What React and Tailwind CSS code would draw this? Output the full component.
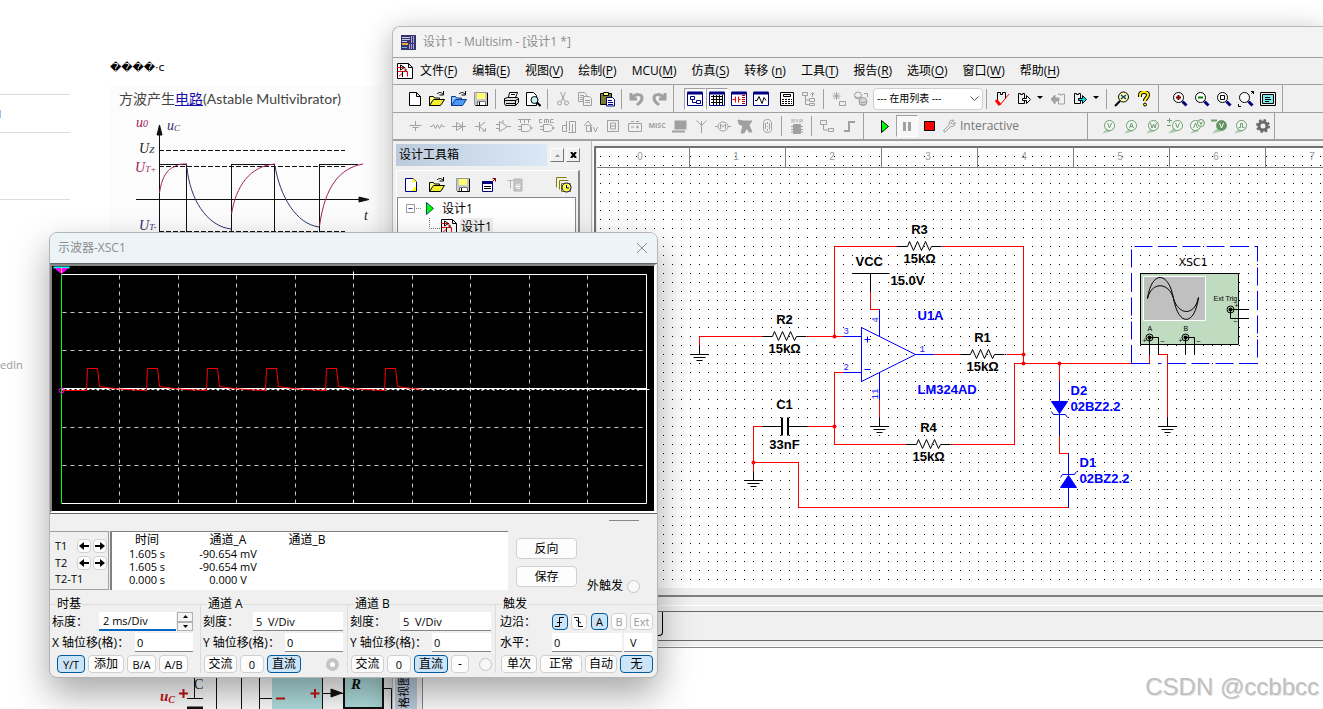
import React from "react";

const ui = "font-['Open_Sans','Noto_Sans_CJK_SC',sans-serif]";

// ---------- icons ----------

function Icon({ children, color = "#000", size = 16 }) {
  return (
    <svg
      width={size}
      height={size}
      viewBox="0 0 16 16"
      fill="none"
      stroke={color}
      strokeWidth="1"
      aria-hidden="true"
      className="shrink-0"
    >
      {children}
    </svg>
  );
}

const G = "#a0a0a0";

const magnifier = (inner) => (
  <Icon>
    <circle cx="6.5" cy="6.5" r="5" fill="#fff" />
    <path d="M10.5 10.5l4 4" stroke="#000080" strokeWidth="3" />
    {inner}
  </Icon>
);

const icons = {
  newFile: (
    <Icon>
      <path d="M2.500 1.500h7l4 4v9h-11zM9.500 1.500v4h4" fill="#fff" />
    </Icon>
  ),
  newYellow: (
    <Icon>
      <path d="M2.500 1.500h8l3 3v10h-11z" fill="#fff" stroke="#000080" />
      <path d="M10 1l4 4h-4zM8 14l5-5v5z" fill="#ffff00" stroke="none" />
    </Icon>
  ),
  open: (
    <Icon>
      <path d="M.5 14.500v-9h4l1 1.500h5v2" fill="#ffff80" />
      <path d="M.5 14.500l4-6h11l-4 6z" fill="#f4ee30" />
      <path d="M8 3c2-2 4-2 6 0M14.500 0v4h-4" />
    </Icon>
  ),
  openBlue: (
    <Icon>
      <path d="M.5 14.500v-9h4l1 1.500h5v2" fill="#8fc4ff" stroke="#0b3a8c" />
      <path d="M.5 14.500l4-6h11l-4 6z" fill="#4a9bf5" stroke="#0b3a8c" />
      <path d="M8 3c2-2 4-2 6 0M14.500 0v4h-4" />
    </Icon>
  ),
  save: (
    <Icon>
      <path d="M1.500 1.500h13v13h-12l-1-1z" fill="#c8c8c8" stroke="#999" />
      <path d="M4 2h8v6H4z" fill="#ffff70" stroke="none" />
      <path d="M4.500 10.500h8v4h-8z" fill="#fff" stroke="#777" />
      <path d="M6.500 11v3M14.500 2v12.500h-12" stroke="#000" />
    </Icon>
  ),
  print: (
    <Icon>
      <path d="M5.500 6.500l1-5h8l-2 5" fill="#fff" />
      <path d="M1.500 7.500l3-1h10l1 1v4l-3 3h-10l-1-2z" fill="#ddd" />
      <path d="M1.500 9.500h11l3-2M3 12.500h9M8 3.500h4M12.500 9.500v5" />
    </Icon>
  ),
  preview: (
    <Icon>
      <path d="M1.500 1.500h7l3 3v10h-10z" fill="#fff" />
      <circle cx="9.500" cy="9" r="3.500" fill="#c9f1f5" />
      <path d="M12 11.500l3.500 3.500" strokeWidth="2" />
    </Icon>
  ),
  cut: (
    <Icon color={G}>
      <path d="M5.500 1l4 9M10.500 1l-4 9" />
      <circle cx="4.500" cy="12" r="2" />
      <circle cx="11.500" cy="12" r="2" />
    </Icon>
  ),
  copy: (
    <Icon color={G}>
      <path d="M1.500 1.500h6l2 2v7h-8zM3 4.500h4M3 6.500h4M3 8.500h4" />
      <path d="M6.500 5.500h6l2 2v7h-8zM8 9.500h5M8 11.500h5" fill="#f0f0f0" />
    </Icon>
  ),
  paste: (
    <Icon>
      <path d="M1.500 2.500h11v11h-11z" fill="#7a7a2e" />
      <path d="M4.500 1.500h5v3h-5z" fill="#ffff80" />
      <path d="M7.500 6.500h6l2 2v6.500h-8z" fill="#fff" stroke="#000080" />
      <path d="M9 9.500h4M9 11.500h5M9 13.500h5" stroke="#000080" />
    </Icon>
  ),
  undo: (
    <Icon color={G}>
      <path d="M2 2v6h6M3 7c4-5 10-4 10 0 0 4-3 5-5 7" strokeWidth="3" />
    </Icon>
  ),
  redo: (
    <Icon color={G}>
      <path d="M14 2v6H8M13 7C9 2 3 3 3 7c0 4 3 5 5 7" strokeWidth="3" />
    </Icon>
  ),
  toolbox: (
    <Icon color="#000080">
      <path d="M.5 1.500h15v13h-15z" fill="#fff" />
      <path d="M.5 2h15" strokeWidth="3" />
      <path d="M3.500 5.500h4v3h-4zM9.500 9.500h4v3h-4zM5.500 9v2.500h4" />
    </Icon>
  ),
  sheet: (
    <Icon color="#000080">
      <path d="M.5 1.500h15v13h-15z" fill="#fff" />
      <path d="M.5 2h15" strokeWidth="3" />
      <path d="M2 5.500h12M2 8.500h12M2 11.500h12M4.500 4v10M7.500 4v10M10.500 4v10M13.500 4v10" stroke="#000" />
    </Icon>
  ),
  spice: (
    <Icon color="#000080">
      <path d="M.5 1.500h15v13h-15z" fill="#fff" />
      <path d="M.5 2h15" strokeWidth="3" />
      <path d="M1.500 8.500h3M4.500 5.500v6M7.500 5.500v6M7.500 8.500h2" stroke="#f00" />
      <path d="M12.500 4v10" stroke="#a00" strokeWidth="3" strokeDasharray="1 1" />
    </Icon>
  ),
  grapher: (
    <Icon color="#000080">
      <path d="M.5 1.500h15v13h-15z" fill="#fff" />
      <path d="M.5 2h15" strokeWidth="3" />
      <path d="M2 9.500h2l2-4 3 7 2-6 2 3" stroke="#000" />
    </Icon>
  ),
  calc: (
    <Icon>
      <path d="M1.500 1.500h13v13h-13z" fill="#fff" />
      <path d="M4.500 3.500h7v2h-7z" />
      <path d="M3 8.500h10M3 10.500h10M3 12.500h10" strokeDasharray="2 1" />
    </Icon>
  ),
  tree: (
    <Icon color={G}>
      <path d="M1.500 1.500h5v3h-5zM8.500 7.500h5v3h-5zM8.500 12.500h5v2h-5zM4.500 5v8.500h4M4.500 9h4M11.500 6V2M9.500 3.500l2-2 2 2" />
    </Icon>
  ),
  spark: (
    <Icon color={G}>
      <path d="M5.500 1v8M1.500 5h8M2.500 2l6 6M8.500 2l-6 6M8.500 10.500h6v4h-6z" />
    </Icon>
  ),
  database: (
    <Icon color={G}>
      <circle cx="5" cy="4.500" r="3.500" />
      <circle cx="10" cy="10.500" r="4" fill="#d4d4d4" />
      <path d="M1.500 5c2 2 5 2 7 0M6 10c2 2 6 2 8 0M6 12.500c2 2 6 2 8 0M11 2.500h3.500V6" />
    </Icon>
  ),
  erc: (
    <Icon>
      <path d="M3.500 10.500v-9h3v2h2v-2h3v6" />
      <path d="M3 9l3 5L15 3" stroke="#f00" />
      <path d="M2 9l4 5" stroke="#f00" strokeWidth="3" />
    </Icon>
  ),
  toPcb: (
    <Icon>
      <path d="M2.500 12.500v-10h2v1h2v-1h2v10z" />
      <path d="M6.500 7.500h4v-3l4 4-4 4v-3h-4z" fill="#fff" />
    </Icon>
  ),
  fromPcb: (
    <Icon color={G}>
      <path d="M1 8l4-4v3h4v3H5v3z" fill={G} />
      <path d="M8.500 4v-1h2v1h2v-1h2v10h-6v-2" />
    </Icon>
  ),
  toPcbCyan: (
    <Icon>
      <path d="M2.500 12.500v-10h2v1h2v-1h2v10z" />
      <path d="M6.500 7.500h4v-3l4 4-4 4v-3h-4z" fill="#00e5e5" />
    </Icon>
  ),
  findExample: (
    <Icon>
      <circle cx="9.500" cy="6" r="5" fill="#ffffb0" />
      <path d="M6 10l-5 5" strokeWidth="2" />
      <path d="M7 4l5 4M12 4L7 8" stroke="#0a4a7a" strokeWidth="1.500" />
    </Icon>
  ),
  help: (
    <Icon>
      <path d="M4 6V4c0-4 8-4 8 0 0 3-3 3-3 6" strokeWidth="4" />
      <path d="M4 6V4c0-4 8-4 8 0 0 3-3 3-3 6" stroke="#ffee00" strokeWidth="2" />
      <circle cx="9" cy="13.500" r="1.500" fill="#ffee00" />
    </Icon>
  ),
  zoomIn: magnifier(<path d="M4 6.500h5M6.500 4v5" stroke="#800000" strokeWidth="2" />),
  zoomOut: magnifier(<path d="M4 6.500h5" stroke="#008000" strokeWidth="2" />),
  zoomArea: magnifier(<path d="M4.500 4.500h4v4h-4z" />),
  zoomFit: magnifier(<path d="M13 .5h2.500V3M.5 13v2.500H3M15.500 .5l-2 2" />),
  fullScreen: (
    <Icon>
      <path d="M.5 1.500h15v13h-15z" fill="#f0f0f0" />
      <path d="M2.500 3.500h11v9h-11z" fill="#7fe8ea" />
      <path d="M5 6.500h5M5 8.500h6M5 10.500h4" />
    </Icon>
  ),
  schematic: (
    <Icon>
      <path d="M.5 .5h11l4 4v11H.5zM11.500 .5v4h4" fill="#fff" />
      <path d="M0 4.500h8v4H1M8.500 8.500h2v5M2 13l4-3" stroke="#f00" />
      <path d="M3.500 2l4 2.500-4 2.500zM5.500 8v6M9 6v3" />
    </Icon>
  ),
  report: (
    <Icon>
      <path d="M1.500 4.500h10v10h-10z" fill="#fff" stroke="#000080" />
      <path d="M1 5.500h11" stroke="#000080" strokeWidth="3" />
      <path d="M3 9.500h7M3 11.500h7" />
      <path d="M11 5l3.500-3.500M11.500 1.500h3v3" stroke="#800000" />
    </Icon>
  ),
  rename: (
    <Icon color="#b4b4b4">
      <path d="M.5 3.500h6M3.500 3.500v8" />
      <path d="M7 2h8v12H7z" fill="#c4c4c4" />
      <path d="M9 9.500h4c0-3-4-3-4 0 0 2 3 2.500 4 1.500" stroke="#fff" />
    </Icon>
  ),
  history: (
    <Icon color="#808000">
      <path d="M.5 10.500v-10h10M3.500 12.500v-9h9M5.500 14.500v-8h9v8z" />
      <circle cx="10.500" cy="10.500" r="4.500" fill="#ffff40" stroke="#000080" />
      <path d="M10.500 8v3h2.500" stroke="#000080" />
    </Icon>
  ),
};

// component bar: one grey outline per part family
const partIcons = [
  ["电源", <path d="M8.500 3v4M2.500 7.500h12M5.500 9.500h6M8.500 10v3" />],
  ["基本", <path d="M1 8.500h2l1.500-2 2 4 2-4 2 4 2-4 1 2h2" />],
  ["二极管", <path d="M1 8.500h14M5.500 4.500v8l6-4zM11.500 4v9" />],
  ["晶体管", <path d="M2 8.500h4M6.500 4v9M7 8l5-4M7 9l5 4M9.500 13h3v-3" />],
  ["模拟", <path d="M4.500 3.500v10l8-5zM1 6.500h3M1 10.500h3M12 8.500h4M8 2v3" />],
  ["TTL", <path d="M1 1.500h13M3.500 1v4M7.500 1v4M11.500 1v4M4.500 6.500h5c6 0 6 7 0 7h-5zM1 8.500h3M1 11.500h3M13 10h3" />],
  ["CMOS", <path d="M3 1.500H.500v3H3M5.500 5V1.500h4V5M7.500 1v4M14.500 1.500h-3v3h3M4.500 6.500h5c6 0 6 7 0 7h-5zM1 8.500h3M1 11.500h3M13 10h3" />],
  ["其他数字", <path d="M1.500 13.500v-6h4v6zM5.500 3v11M8.500 13V3.500h6v11M11.500 6v8M7 14.500h8" />],
  ["混合", <path d="M1 8l4-5 4 5M3.500 7.500v6h4v-6zM8.500 9v5M10.500 9l2 5 2-5" />],
  ["指示器", <path d="M2.500 2.500h11v11h-11zM5.500 5h5v6h-5zM5.500 8h5" />],
  ["功率", <path d="M1.500 5.500h13v8h-13zM4 3.500h3M9 3.500h3M4 9h3M9 9h3M10.500 7.500v3" />],
  ["杂项", null],
  ["外设", <path d="M4.500 3.500h10v7h-10zM1 13.500h13" fill={G} strokeWidth="2" />],
  ["射频", <path d="M8.500 15V3M3.500 2.500l5 5 5-5" />],
  ["机电", <path d="M0 8.500h3M13 8.500h3M5.500 11V6l2.500 3 2.500-3v5M3 8.500a5 4.500 0 0 1 10 0 5 4.500 0 0 1-10 0" />],
  ["NI", <path d="M1 2l5 1h9l-3 4 3 7h-3l-2-4-3 5H4l2-7-4-2z" fill={G} />],
  ["连接器", <path d="M4.500 4.500c0-4 8-4 8 0v7c0 4-8 4-8 0zM8.500 4v2M8.500 8v1M8.500 11v2M6.500 5v6M10.500 5v6" />],
];

function ToolButton({ label, pressed, children, onClick }) {
  return (
    <button
      type="button"
      aria-label={label}
      onClick={onClick}
      className={
        pressed
          ? "flex h-[22px] w-[22px] shrink-0 items-center justify-center border border-[#a0a0a0] border-r-white border-b-white bg-[#f8f8f8]"
          : "flex h-[22px] w-[22px] shrink-0 items-center justify-center"
      }
    >
      {children}
    </button>
  );
}

function Sep() {
  return <span className="mx-[3px] h-5 w-[2px] shrink-0 border-l border-[#a0a0a0]" />;
}

function Band() {
  return <span className="ml-[3px] mr-[10px] h-full w-px shrink-0 bg-[#a0a0a0]" />;
}

function Caret() {
  return (
    <span className="flex w-3 shrink-0">
      <svg width="9" height="5" viewBox="0 0 9 5" aria-hidden="true">
        <path d="M2 0h6l-3 3z" fill="#000" />
      </svg>
    </span>
  );
}

function MenuBar() {
  const items = [
    ["文件(", "F"],
    ["编辑(", "E"],
    ["视图(", "V"],
    ["绘制(", "P"],
    ["MCU(", "M"],
    ["仿真(", "S"],
    ["转移 (", "n"],
    ["工具(", "T"],
    ["报告(", "R"],
    ["选项(", "O"],
    ["窗口(", "W"],
    ["帮助(", "H"],
  ];
  return (
    <nav className="flex h-[27px] shrink-0 items-center gap-[7px] border-t border-[#a0a0a0] pl-1 text-xs whitespace-nowrap">
      {icons.schematic}
      <div className="flex gap-[15px]">
        {items.map(([text, key]) => (
          <button key={key} type="button">
            {text}
            <u className="underline-offset-2">{key}</u>)
          </button>
        ))}
      </div>
    </nav>
  );
}

function MainToolbar() {
  return (
    <div className="flex h-7 shrink-0 items-center border-t border-[#a0a0a0] pl-[11px]">
      <ToolButton label="新建">{icons.newFile}</ToolButton>
      <ToolButton label="打开">{icons.open}</ToolButton>
      <ToolButton label="打开样本">{icons.openBlue}</ToolButton>
      <ToolButton label="保存">{icons.save}</ToolButton>
      <Sep />
      <ToolButton label="打印">{icons.print}</ToolButton>
      <ToolButton label="打印预览">{icons.preview}</ToolButton>
      <Sep />
      <ToolButton label="剪切">{icons.cut}</ToolButton>
      <ToolButton label="复制">{icons.copy}</ToolButton>
      <ToolButton label="粘贴">{icons.paste}</ToolButton>
      <Sep />
      <ToolButton label="撤消">{icons.undo}</ToolButton>
      <ToolButton label="重做">{icons.redo}</ToolButton>
      <Band />
      <ToolButton label="设计工具箱" pressed>{icons.toolbox}</ToolButton>
      <ToolButton label="电子表格" pressed>{icons.sheet}</ToolButton>
      <ToolButton label="SPICE">{icons.spice}</ToolButton>
      <ToolButton label="图示仪">{icons.grapher}</ToolButton>
      <span className="w-1 shrink-0" />
      <ToolButton label="后处理器">{icons.calc}</ToolButton>
      <ToolButton label="母电路图">{icons.tree}</ToolButton>
      <Sep />
      <ToolButton label="元器件向导">{icons.spark}</ToolButton>
      <ToolButton label="数据库管理器">{icons.database}</ToolButton>
      <div className="relative ml-px w-[110px] shrink-0">
        <select
          aria-label="在用列表"
          className="block h-[22px] w-full appearance-none rounded-sm border border-[#cfcfcf] bg-white pl-[3px] text-[10px]"
        >
          <option>--- 在用列表 ---</option>
        </select>
        <svg width="9" height="6" viewBox="0 0 9 6" className="pointer-events-none absolute top-2 right-1" aria-hidden="true">
          <path d="M.5 .5l4 4 4-4" fill="none" stroke="#555" />
        </svg>
      </div>
      <Sep />
      <ToolButton label="电器法则查验">{icons.erc}</ToolButton>
      <ToolButton label="转移到布局">{icons.toPcb}</ToolButton>
      <Caret />
      <ToolButton label="反向注解">{icons.fromPcb}</ToolButton>
      <ToolButton label="正向注解">{icons.toPcbCyan}</ToolButton>
      <Caret />
      <Sep />
      <ToolButton label="查找范例">{icons.findExample}</ToolButton>
      <ToolButton label="帮助">{icons.help}</ToolButton>
      <Band />
      <ToolButton label="放大">{icons.zoomIn}</ToolButton>
      <ToolButton label="缩小">{icons.zoomOut}</ToolButton>
      <ToolButton label="缩放区域">{icons.zoomArea}</ToolButton>
      <ToolButton label="缩放页面">{icons.zoomFit}</ToolButton>
      <ToolButton label="全屏">{icons.fullScreen}</ToolButton>
      <Band />
    </div>
  );
}

function Probe({ children, x = 8.5, filled }) {
  return (
    <Icon color="#6f9a6f">
      <path d="M1 15.500l5-5 4 3z" fill="#a9cba9" stroke="none" />
      <circle cx={x} cy="7.500" r="5" fill={filled ? "#5f935f" : "#f3f8f3"} />
      {children}
    </Icon>
  );
}

function PartsToolbar() {
  return (
    <div className="flex h-[29px] shrink-0 items-center border-t border-b-2 border-[#a0a0a0] pl-[11px]">
      {partIcons.map(([label, art]) => (
        <ToolButton key={label} label={label}>
          {art ? <Icon color={G}>{art}</Icon> : <span className="text-[7px] font-bold text-[#a0a0a0]">MISC</span>}
        </ToolButton>
      ))}
      <Sep />
      <ToolButton label="MCU">
        <Icon color={G}>
          <path d="M4.500 6.500h7v9h-7zM2 8.500h12M2 11.500h12M2 14h12" fill={G} />
          <path d="M3 1v3.500M5 1v3.500M8 1v3.500M11 1v3.500M13 1v3.500" />
        </Icon>
      </ToolButton>
      <Sep />
      <ToolButton label="层次块">
        <Icon color={G}>
          <path d="M1.500 2.500h6v4h-6zM9.500 10.500h5v3h-5zM4.500 7v5h5" />
        </Icon>
      </ToolButton>
      <ToolButton label="总线">
        <Icon color={G}>
          <path d="M3 13h5V4h6" strokeWidth="2" />
        </Icon>
      </ToolButton>
      <Band />
      <ToolButton label="运行">
        <Icon>
          <path d="M4.500 2.500v12l7-6z" fill="#0f0" />
        </Icon>
      </ToolButton>
      <ToolButton label="暂停" pressed>
        <Icon color={G}>
          <path d="M5.500 4v9M10.500 4v9" strokeWidth="3" />
        </Icon>
      </ToolButton>
      <ToolButton label="停止">
        <Icon>
          <path d="M3.500 3.500h10v9h-10z" fill="#f00" />
        </Icon>
      </ToolButton>
      <button type="button" className="flex w-[144px] shrink-0 items-center text-xs text-[#777]">
        <span className="flex w-5 justify-end pr-1">
          <Icon color="#888" size={14}>
            <path d="M1.500 13.500l7-7c-1-3 1-6 5-5l-3 3 1.500 1.500 3-2c0 4-2 5-5 4.500l-6.500 6.500z" />
          </Icon>
        </span>
        Interactive
      </button>
      <Band />
      <ToolButton label="电压探针"><Probe><path d="M6.500 5l2 5 2-5" /></Probe></ToolButton>
      <ToolButton label="电流探针"><Probe><path d="M6.500 10l2-5 2 5M7 8.500h3" /></Probe></ToolButton>
      <ToolButton label="功率探针"><Probe><path d="M5.500 5l1.500 5 1.500-4 1.500 4 1.500-5" /></Probe></ToolButton>
      <ToolButton label="差分电压探针"><Probe x={10.5}><path d="M8.500 5l2 5 2-5M0 2.500h5M2.500 0v5M0 7.500h4" /></Probe></ToolButton>
      <ToolButton label="电压电流探针">
        <Probe x={6.5}>
          <circle cx="12" cy="5" r="3.500" fill="#f3f8f3" />
          <path d="M4.500 10l2-5 2 5M10.500 3.500l1.500 3 1.500-3" />
        </Probe>
      </ToolButton>
      <ToolButton label="参考电压探针"><Probe x={10.5} filled><path d="M8.500 5l2 5 2-5" stroke="#fff" /><path d="M0 2.500h6" strokeWidth="2" /></Probe></ToolButton>
      <ToolButton label="数字探针"><Probe><path d="M5.500 9.500h2v-4h2v4h2" /></Probe></ToolButton>
      <ToolButton label="探针设置">
        <Icon color="#6a6a6a">
          <circle cx="8" cy="8" r="4" strokeWidth="3" />
          <circle cx="8" cy="8" r="6" strokeWidth="2" strokeDasharray="2.400 2.300" />
        </Icon>
      </ToolButton>
      <span className="h-full w-px shrink-0 bg-[#a0a0a0]" />
    </div>
  );
}

function DesignToolbox() {
  return (
    <aside className="flex w-[199px] shrink-0 flex-col border-r border-[#b8b8b8] pt-[2px] pr-[11px] pl-[3px]">
      <div className="flex h-6 items-center gap-[2px]">
        <h2 className="mr-[1px] flex h-[22px] flex-1 items-center bg-linear-to-r from-[#bccbdc] to-[#dbe8f6] pl-[3px] text-xs">
          设计工具箱
        </h2>
        <button
          type="button"
          aria-label="收起"
          className="flex size-[14px] items-center justify-center border border-white border-r-[#777] border-b-[#777]"
        >
          <svg width="5" height="3" viewBox="0 0 5 3" aria-hidden="true"><path d="M0 3h5L2.500 0z" fill="#999" /></svg>
        </button>
        <button
          type="button"
          aria-label="关闭工具箱"
          className="flex size-[14px] items-center justify-center border border-white border-r-[#777] border-b-[#777]"
        >
          <svg width="7" height="6" viewBox="0 0 7 6" aria-hidden="true"><path d="M1 0l5 6M6 0L1 6" stroke="#000" strokeWidth="2" /></svg>
        </button>
      </div>
      <div className="mt-[3px] flex flex-1 flex-col border-t border-r-2 border-l border-t-white border-r-[#888] border-l-white">
        <div className="flex h-[26px] items-center gap-[4px] px-[3px] pt-[2px]">
          <ToolButton label="新建设计">{icons.newYellow}</ToolButton>
          <ToolButton label="打开设计">{icons.open}</ToolButton>
          <ToolButton label="保存设计">{icons.save}</ToolButton>
          <ToolButton label="关闭设计">{icons.report}</ToolButton>
          <ToolButton label="重命名">{icons.rename}</ToolButton>
          <span className="flex-1" />
          <ToolButton label="历史">{icons.history}</ToolButton>
        </div>
        <ul className="mr-[2px] flex-1 border border-[#828790] bg-white pt-[2px] pl-2 text-xs leading-[18px]">
          <li className="flex items-center">
            <svg width="35" height="18" viewBox="0 0 35 18" aria-hidden="true">
              <path d="M.5 4.500h8v8h-8z" fill="#fff" stroke="#999" />
              <path d="M2.500 8.500h4" stroke="#2a4ab0" />
              <path d="M10 8.500h6" stroke="#888" strokeDasharray="1 1" />
              <path d="M20.500 2.500v12l7-6z" fill="#0f0" stroke="#055" />
            </svg>
            <span className="pl-px">设计1</span>
          </li>
          <li className="flex items-center">
            <svg width="35" height="18" viewBox="0 0 35 18" aria-hidden="true">
              <path d="M23.500 0v10.500h11" fill="none" stroke="#777" strokeDasharray="1 1" />
            </svg>
            {icons.schematic}
            <span className="ml-[3px] bg-[#efefef] px-px">设计1</span>
          </li>
        </ul>
      </div>
    </aside>
  );
}

// ---------- circuit ----------

function Resistor({ x, y, name, value = "15kΩ" }) {
  return (
    <g transform={`translate(${x} ${y})`}>
      <path d="M-22 0H-12L-10-5L-6 4L-2-5L2 4L6-5L10 4L12 0H22" stroke="#000" fill="none" />
      <Label x={0} y={-13} anchor="middle">{name}</Label>
      <Label x={0} y={16} anchor="middle">{value}</Label>
    </g>
  );
}

function Ground({ x, y }) {
  return <path transform={`translate(${x} ${y})`} d="M0-9V0M-9 0H9M-6 3H6M-3 6H3" stroke="#000" fill="none" />;
}

function Label({ x, y, anchor = "start", color = "#000", children }) {
  return (
    <text
      x={x}
      y={y}
      textAnchor={anchor}
      fill={color}
      className="font-['Liberation_Sans',sans-serif] text-[13px] font-bold"
    >
      {children}
    </text>
  );
}

function Pin({ x, y, children, turn }) {
  return (
    <text
      x={x}
      y={y}
      fill="#2020ff"
      transform={turn ? `rotate(-90 ${x} ${y})` : undefined}
      className="font-['Liberation_Mono',monospace] text-[9px]"
    >
      {children}
    </text>
  );
}

function Terminal({ x, y }) {
  return (
    <g>
      <circle cx={x} cy={y} r="3.500" fill="none" stroke="#000" />
      <circle cx={x} cy={y} r="2" fill="#000" />
    </g>
  );
}

const nodes = [[834, 336], [834, 426], [753, 462], [1023, 354], [1023, 363], [1059, 363]];

function Canvas() {
  return (
    <svg width="100%" height="100%" className="block bg-white" role="img" aria-label="设计1 电路图">
      <defs>
        <pattern id="dots" x="3" y="8" width="9" height="9" patternUnits="userSpaceOnUse">
          <rect width="1" height="1" fill="#000" />
        </pattern>
      </defs>
      <rect width="100%" height="100%" fill="url(#dots)" />
      <g fill="#999" className="font-['Liberation_Sans',sans-serif] text-[10px]">
        {[0, 1, 2, 3, 4, 5, 6, 7].map((n) => (
          <g key={n}>
            <text x={43 + n * 96} y="12" textAnchor="middle">{n}</text>
            <rect x={92 + n * 96} y="0" width="1" height="19" fill="#808080" />
          </g>
        ))}
        <rect y="19" width="100%" height="1" fill="#808080" />
      </g>

      <g transform="translate(-596.5 -147.500)" fill="none">
        {/* wires */}
        <g stroke="#f00">
          <path d="M834 336V246H897M942 246H1023V363" />
          <path d="M699 345V336H763M807 336H843" />
          <path d="M843 372H834V444H907M951 444H1014V363H1131M1149 363V354" />
          <path d="M753 426H762M807 426H834M753 426V472M753 462H798V507H1068" />
          <path d="M870 291V309H879M879 399V418M934 354H961M1006 354H1023" />
          <path d="M1059 363V381M1059 435V453H1068" />
          <path d="M1158 354H1167V417" />
        </g>
        {nodes.map(([x, y]) => (
          <circle key={x + "-" + y} cx={x} cy={y} r="2" fill="#f00" />
        ))}

        <Resistor x={919} y={246} name="R3" />
        <Resistor x={784} y={336} name="R2" />
        <Resistor x={982} y={354} name="R1" />
        <Resistor x={928} y={444} name="R4" />

        {/* supply */}
        <path d="M852 273H889M870 273V291" stroke="#000" />
        <Label x={855} y={265}>VCC</Label>
        <Label x={890} y={284}>15.0V</Label>

        {/* op amp */}
        <g stroke="#00f">
          <path d="M861 327V381L915 354ZM843 336H861M843 372H861M915 354H934M879 309V336M879 372V399" />
          <path d="M864 339H870M867 336V342M864 369H870" />
        </g>
        <Pin x={843} y={333}>3</Pin>
        <Pin x={843} y={369}>2</Pin>
        <Pin x={919} y={351}>1</Pin>
        <Pin x={877} y={322} turn>4</Pin>
        <Pin x={877} y={399} turn>11</Pin>
        <Label x={917} y={319} color="#00f">U1A</Label>
        <Label x={917} y={393} color="#00f">LM324AD</Label>

        {/* capacitor */}
        <path d="M762 426H781M788 426H807" stroke="#000" />
        <path d="M781.500 417V435M787.500 417V435" stroke="#000" strokeWidth="2" />
        <Label x={784} y={408} anchor="middle">C1</Label>
        <Label x={784} y={448} anchor="middle">33nF</Label>

        <Ground x={699} y={354} />
        <Ground x={753} y={480} />
        <Ground x={879} y={426} />
        <Ground x={1167} y={426} />

        {/* zener pair */}
        <g stroke="#00f">
          <path d="M1059 381V435M1051 411L1053 414H1065L1067 417" />
          <path d="M1051 401H1067L1059 413Z" fill="#00f" />
          <path d="M1068 453V507M1060 477L1062 474H1074L1076 471" />
          <path d="M1060 487H1076L1068 475Z" fill="#00f" />
        </g>
        <Label x={1070} y={394} color="#00f">D2</Label>
        <Label x={1070} y={410} color="#00f">02BZ2.2</Label>
        <Label x={1079} y={466} color="#00f">D1</Label>
        <Label x={1079} y={482} color="#00f">02BZ2.2</Label>

        {/* oscilloscope symbol */}
        <path d="M1131 363V246H1257V363H1158" stroke="#00f" strokeDasharray="18 6" />
        <path d="M1131 363H1149" stroke="#00f" />
        <path d="M1140 273H1238V344H1140Z" fill="#c0dcc0" stroke="#000" />
        <path d="M1143 276H1205V320H1143Z" fill="#c0c0c0" stroke="#fff" />
        <path d="M1147 298C1151 270 1168 270 1173 298S1194 326 1198 297" stroke="#000" />
        <path d="M1147 298C1151 281 1168 281 1173 298S1194 316 1198 297" stroke="#000" />
        <path d="M1149 337V354M1149 337H1158V354M1185 337V354M1185 337H1194V354M1230 309H1248M1230 309V318H1248" stroke="#000" />
        <Terminal x={1149} y={337} />
        <Terminal x={1185} y={337} />
        <Terminal x={1230} y={309} />
        <g fill="#000" className="font-['Liberation_Sans',sans-serif] text-[7px]">
          <text x="1147" y="330">A</text>
          <text x="1183" y="330">B</text>
          <text x="1213" y="300">Ext Trig</text>
          <text x="1142" y="342">+</text>
          <text x="1178" y="342">+</text>
          <text x="1234" y="307">+</text>
          <text x="1160" y="342">–</text>
          <text x="1196" y="342">–</text>
          <text x="1233" y="322">–</text>
        </g>
        <text x="1178" y="265" fill="#000" className="font-['DejaVu_Sans',sans-serif] text-[11px]">XSC1</text>
      </g>
    </svg>
  );
}

function MultisimWindow() {
  return (
    <section className="absolute top-[26px] right-0 bottom-0 left-[392px] flex flex-col overflow-hidden rounded-tl-lg border-t border-l border-[#b8b8b8] bg-[#f0f0f0] shadow-[0_6px_28px_rgba(0,0,0,0.3)]">
      <header className="flex h-[30px] shrink-0 items-center gap-[7px] bg-[#f3f3f3] pl-2 text-xs text-[#8c8c8c]">
        <svg width="15" height="15" viewBox="0 0 15 15" aria-hidden="true">
          <rect width="15" height="15" fill="#36346f" />
          <path d="M1 2.500h8M1 4.500h8M1 6.500h5" stroke="#c9c6e8" />
          <path d="M10.500 1v7M12.500 1v7M8.500 9v5M10.500 9v5M12.500 9v5" stroke="#a9a7d8" />
          <path d="M1 9h6" stroke="#e8a83a" strokeWidth="2" />
          <path d="M1 12.500h5" stroke="#7ab0e8" />
        </svg>
        <h1>设计1 - Multisim - [设计1 *]</h1>
      </header>
      <MenuBar />
      <MainToolbar />
      <PartsToolbar />
      <div className="flex min-h-0 flex-1">
        <DesignToolbox />
        <div className="mt-px ml-px flex min-w-0 flex-1 flex-col border-t border-l border-white">
          <div className="mt-[3px] flex-1 overflow-hidden border-t-2 border-l-2 border-[#707070] pl-px">
            <Canvas />
          </div>
        </div>
      </div>
      <div className="h-[7px] shrink-0" />
      <div className="h-[2px] shrink-0 bg-[#808080]" />
      <div className="flex h-[50px] shrink-0 flex-col pt-2">
        <div className="border-t border-white" />
        <div className="mt-[5px] flex h-[30px] border-y border-[#6a6a6a]">
          <div className="h-6 w-[270px] rounded-br-sm border-r border-b border-black" />
        </div>
        <div className="mt-[5px] h-px bg-white" />
      </div>
      <div className="flex h-[62px] shrink-0 bg-[#f0f0f0]">
        <div className="w-[29px] shrink-0 pl-[2px]">
          <div className="h-full w-[22px] bg-[#bccbdc] pt-7 pl-px">
            <h2 className="h-[33px] w-4 rotate-180 text-[11px] leading-4 whitespace-nowrap [text-orientation:sideways] [writing-mode:vertical-rl]">
              格视图
            </h2>
          </div>
        </div>
        <div className="flex-1 border-t border-l border-[#828790] bg-white" />
      </div>
    </section>
  );
}

// ---------- oscilloscope ----------

const verticals = [119, 178, 236, 295, 353, 412, 470, 529, 587];
const pulses = [86, 146, 206, 265, 325, 384];

function ScopeScreen() {
  const trace = pulses
    .map((x) => `L${x} 390L${x + 1} 368H${x + 11}L${x + 13} 386L${x + 20} 387L${x + 28} 388L${x + 38} 389`)
    .join("");
  return (
    <svg width="100%" height="245" className="block bg-black" role="img" aria-label="示波器波形">
      <g transform="translate(-51.500 -265.500)" fill="none">
        <g stroke="#c8c8c8" strokeDasharray="4 4">
          {verticals.map((x) => (
            <path key={x} d={`M${x} 275V503`} />
          ))}
          {[312, 350, 427, 465].map((y) => (
            <path key={y} d={`M62 ${y}H646`} />
          ))}
        </g>
        <path d="M61 274H646V503H61M353 271V277M353 500V503" stroke="#fff" />
        <path d="M61 388H646M638 389H649" stroke="#fff" />
        <path d="M61 389H646" stroke="#fff" strokeDasharray="3 2" />
        <path d="M61 390H646" stroke="#fff" strokeDasharray="1 11" />
        <path d={`M61 390${trace}`} stroke="#f00" />
        <path d="M61 274V503" stroke="#0f0" />
        <path d="M53 267H69" stroke="#0ff" strokeWidth="2" />
        <path d="M55 268H67L61 273Z" fill="#f0f" stroke="#f0f" />
        <path d="M61 267V272" stroke="#ff0" strokeDasharray="2 1" />
        <circle cx="61" cy="390" r="2.500" stroke="#f0f" />
      </g>
    </svg>
  );
}

function Btn({ active, className, children, label, disabled }) {
  return (
    <button
      type="button"
      aria-label={label}
      disabled={disabled}
      className={
        "flex shrink-0 items-center justify-center rounded border leading-none disabled:text-[#999] " +
        (active ? "border-[#005a9e] bg-[#cce4f7] " : "border-[#d0d0d0] bg-[#fdfdfd] ") +
        className
      }
    >
      {children}
    </button>
  );
}

function Field({ id, label, labelClass, inputClass, value, focus }) {
  return (
    <>
      <label htmlFor={id} className={"shrink-0 whitespace-nowrap " + labelClass}>
        {label}
      </label>
      <input
        id={id}
        defaultValue={value}
        className={
          "h-[19px] min-w-0 bg-white text-[11px] outline-none " +
          (focus ? "border-b-2 border-[#0067c0] " : "border-b border-[#868686] ") +
          inputClass
        }
      />
    </>
  );
}

function Group({ title, children }) {
  return (
    <fieldset className="min-w-0 border-t border-l border-[#dcdcdc] pl-[2px] first:border-l-0">
      <legend className="ml-1 px-px text-xs leading-[14px]">{title}</legend>
      {children}
    </fieldset>
  );
}

function ArrowBtn({ label, flip }) {
  return (
    <Btn className="size-[14px]" label={label}>
      <svg width="10" height="8" viewBox="0 0 10 8" aria-hidden="true" className={flip ? "shrink-0 rotate-180" : "shrink-0"}>
        <path d="M0 4l5-4v3h5v2H5v3z" />
      </svg>
    </Btn>
  );
}

function Channel({ name, id }) {
  const isA = id === "a";
  return (
    <Group title={name}>
      <div className="flex h-[21px] items-center pr-1">
        <Field id={id + "-scale"} label="刻度：" labelClass="w-[50px]" inputClass="flex-1 pl-[3px]" value="5  V/Div" />
      </div>
      <div className="flex h-[21px] items-center pr-1">
        <Field id={id + "-pos"} label="Y 轴位移(格)：" labelClass="w-[82px]" inputClass="flex-1 pl-[2px]" value="0" />
      </div>
      <div className="mt-[2px] flex items-center gap-[3px] pl-px text-xs">
        <Btn className="h-[18px] w-[33px]">交流</Btn>
        <Btn className="h-[18px] w-6 text-[11px]">0</Btn>
        <Btn className="h-[18px] w-[34px]" active>直流</Btn>
        {!isA && <Btn className="h-[18px] w-[18px]">-</Btn>}
        <input
          type="radio"
          aria-label={name + " 输入"}
          className={
            isA
              ? "mr-2 ml-auto size-[13px] appearance-none rounded-full border-4 border-[#c4c4c4] bg-white"
              : "mr-[3px] ml-auto size-[13px] appearance-none rounded-full border border-[#c4c4c4] bg-[#f8f8f8]"
          }
        />
      </div>
    </Group>
  );
}

function OscilloscopeWindow() {
  return (
    <section className="absolute top-[232px] left-[49px] w-[609px] overflow-hidden rounded-lg border border-[#b4b4b4] bg-[#f0f0f0] shadow-[0_16px_36px_rgba(0,0,0,0.35)]">
      <header className="flex h-[30px] items-center justify-between bg-[#ecf4f8] pr-[9px] pl-2 text-xs text-[#8c8c8c]">
        <h2>示波器-XSC1</h2>
        <button type="button" aria-label="关闭">
          <svg width="12" height="12" viewBox="0 0 12 12" aria-hidden="true">
            <path d="M1 1l10 10M11 1L1 11" stroke="#8c8c8c" strokeWidth="1" />
          </svg>
        </button>
      </header>

      <div className="border-t border-[#666]">
        <div className="mr-px border-t-2 border-r-2 border-b-2 border-l-2 border-t-[#888] border-r-white border-b-white border-l-[#888]">
          <ScopeScreen />
        </div>
        <div className="h-px bg-[#666]" />
      </div>

      <div className="flex h-[17px] justify-end pt-[6px] pr-[18px]">
        <span className="h-px w-[30px] bg-[#888]" />
      </div>

      {/* cursor readout */}
      <div className="flex h-[59px] text-[11px]">
        <div className="flex w-[59px] shrink-0 flex-col border border-[#a0a0a0] border-l-0 pt-[6px] pl-[5px] leading-[14px]">
          <div className="flex h-[15px] items-center gap-[2px]">
            <span className="w-5">T1</span>
            <ArrowBtn label="T1 左移" />
            <ArrowBtn label="T1 右移" flip />
          </div>
          <div className="mt-[2px] flex h-[15px] items-center gap-[2px]">
            <span className="w-5">T2</span>
            <ArrowBtn label="T2 左移" />
            <ArrowBtn label="T2 右移" flip />
          </div>
          <span className="mt-[2px]">T2-T1</span>
        </div>
        <div className="ml-px w-[398px] shrink-0 border-t border-l-2 border-[#808080] bg-white">
          <table className="table-fixed text-center leading-[13px]">
            <thead>
              <tr className="text-xs leading-[15px]">
                <th className="w-[70px] p-0 font-normal">时间</th>
                <th className="w-[92px] p-0 font-normal">通道_A</th>
                <th className="w-[66px] p-0 font-normal">通道_B</th>
              </tr>
            </thead>
            <tbody>
              <tr><td className="p-0">1.605 s</td><td className="p-0">-90.654 mV</td><td /></tr>
              <tr><td className="p-0">1.605 s</td><td className="p-0">-90.654 mV</td><td /></tr>
              <tr><td className="p-0">0.000 s</td><td className="p-0">0.000 V</td><td /></tr>
            </tbody>
          </table>
        </div>
        <div className="flex flex-1 justify-between pt-[7px] pr-[17px] pl-2 text-xs">
          <div className="flex flex-col gap-[7px]">
            <Btn className="h-[21px] w-[61px]">反向</Btn>
            <Btn className="h-[21px] w-[61px]">保存</Btn>
          </div>
          <label className="-mb-1 flex items-center gap-1 self-end whitespace-nowrap">
            外触发
            <input type="radio" className="size-[13px] appearance-none rounded-full border border-[#c4c4c4] bg-[#f8f8f8]" />
          </label>
        </div>
      </div>

      <div className="grid grid-cols-[150px_147px_148px_1fr] pt-[7px] pb-1 text-xs">
        <Group title="时基">
          <div className="flex h-[21px] items-center">
            <Field id="time-scale" label="标度：" labelClass="w-[47px]" inputClass="w-[77px] pl-1" value="2 ms/Div" focus />
            <span className="ml-px flex h-[19px] w-4 flex-col">
              {["增大", "减小"].map((t, i) => (
                <button key={t} type="button" aria-label={t} className="flex flex-1 items-center justify-center border border-[#b0b0b0] bg-[#f4f4f4]">
                  <svg width="5" height="3" viewBox="0 0 5 3" className={i ? "rotate-180" : ""} aria-hidden="true"><path d="M0 3h5L2.500 0z" /></svg>
                </button>
              ))}
            </span>
          </div>
          <div className="flex h-[21px] items-center">
            <Field id="time-pos" label="X 轴位移(格)：" labelClass="w-[83px]" inputClass="w-[58px] pl-[2px]" value="0" />
          </div>
          <div className="mt-[2px] flex items-center gap-[3px] pl-[5px] text-[11px]">
            <Btn className="h-[18px] w-7" active>Y/T</Btn>
            <Btn className="h-[18px] w-9 text-xs">添加</Btn>
            <Btn className="h-[18px] w-[29px]">B/A</Btn>
            <Btn className="h-[18px] w-[29px]">A/B</Btn>
          </div>
        </Group>
        <Channel name="通道 A" id="a" />
        <Channel name="通道 B" id="b" />
        <Group title="触发">
          <div className="flex h-[21px] items-center gap-[3px] pl-[2px] text-[11px]">
            <span className="w-[49px] text-xs">边沿：</span>
            <Btn className="h-4 w-4" label="上升沿" active>
              <svg width="10" height="10" viewBox="0 0 10 10" fill="none" stroke="#000" aria-hidden="true"><path d="M0 9.500h4.500v-9H9M2 5.500h5" /></svg>
            </Btn>
            <Btn className="h-4 w-4" label="下降沿">
              <svg width="10" height="10" viewBox="0 0 10 10" fill="none" stroke="#000" aria-hidden="true"><path d="M0 .5h4.500v9H9M2 3l5 3" /></svg>
            </Btn>
            <Btn className="ml-px h-[17px] w-[17px]" active>A</Btn>
            <Btn className="h-[17px] w-4" disabled>B</Btn>
            <Btn className="h-[17px] w-[23px]" disabled>Ext</Btn>
          </div>
          <div className="flex h-[21px] items-center pr-1 pl-[2px]">
            <Field id="trig-level" label="水平：" labelClass="w-[52px]" inputClass="w-[70px] pl-[2px]" value="0" />
            <input aria-label="电平单位" defaultValue="V" className="ml-[2px] h-[19px] w-7 border-b border-[#868686] bg-white pl-[6px] text-[11px] outline-none" />
          </div>
          <div className="mt-[2px] flex items-center gap-[3px] pl-[3px]">
            <Btn className="h-[18px] w-9">单次</Btn>
            <Btn className="h-[18px] w-[42px]">正常</Btn>
            <Btn className="h-[18px] w-8">自动</Btn>
            <Btn className="h-[18px] w-[33px]" active>无</Btn>
          </div>
        </Group>
      </div>
    </section>
  );
}

// ---------- page behind the windows ----------

function Article() {
  return (
    <main className="flex h-full w-[392px] overflow-hidden">
      <aside className="w-[70px] shrink-0 text-[11px] text-[#999]">
        <div className="h-[95px] border-b border-[#dcdcdc]" />
        <div className="flex h-[38px] items-center border-b border-[#dcdcdc]">
          <span className="h-2 w-px bg-[#8cc4ff]" />
        </div>
        <div className="h-[67px] border-b border-[#dcdcdc]" />
        <p className="mt-[157px] leading-4">edIn</p>
      </aside>
      <article className="flex min-w-0 flex-1 flex-col pl-10">
        <p className="mt-[60px] h-[26px] font-['DejaVu_Sans',sans-serif] text-[11px] leading-4">����·c</p>
        <div className="w-[272px] bg-[#fcfcfc] text-sm text-[#444]">
          <h2 className="h-7 pl-[9px] font-['Lato','Noto_Sans_CJK_SC',sans-serif] leading-[26px] whitespace-nowrap">
            方波产生<a href="#circuit" className="text-[#1a0dab] underline">电路</a>(Astable Multivibrator)
          </h2>
          <svg width="272" height="130" viewBox="110 114 272 130" className="block" fill="none" role="img" aria-label="方波波形">
            <g stroke="#111">
              <path d="M159.500 130V244M136 199.500H364M186.500 164V244M231.500 164V244M274.500 164V244M319.500 164V244" />
              <path d="M159 164.500H187M231 164.500H275M319 164.500H358" />
              <path d="M159 150.500H345M159 166.500H345M159 231.500H345" strokeDasharray="5 2" />
              <path d="M157 135l2.500-10 2.500 10zM359 197l10 2.500-10 2.500z" fill="#111" />
            </g>
            <path d="M159.500 193C162 174 170 168 174 167C178 164 182 164 187 164M231.500 214C236 186 250 166 275 164M319.500 226C325 186 340 168 363 164" stroke="#a02060" />
            <path d="M187 168C190 198 206 226 231 229M275 166C280 196 296 224 319 227" stroke="#303070" />
            <g className="font-['Liberation_Serif',serif] text-[14px] italic">
              <text x="136" y="127" fill="#a02060">u<tspan className="text-[10px]">0</tspan></text>
              <text x="167" y="130" fill="#303070">u<tspan className="text-[9px]" dy="1">C</tspan></text>
              <text x="139" y="153" fill="#222">U<tspan className="text-[9px]">Z</tspan></text>
              <text x="135" y="172" fill="#a02060">U<tspan className="text-[9px]">T+</tspan></text>
              <text x="139" y="230" fill="#303070">U<tspan className="text-[9px]">T-</tspan></text>
              <text x="364" y="220" fill="#222">t</text>
            </g>
          </svg>
        </div>
        <svg width="282" height="45" viewBox="110 664 282 45" className="mt-auto block" fill="none" role="img" aria-label="方波产生电路">
          <g stroke="#111" strokeWidth="1">
            <path d="M194.500 664V698M187 698.500H203M216.500 664V709M241.500 664V709M384 688.500H391.500V709M259.500 664V709M259 698.500H272" />
            <path d="M187 708H203" strokeWidth="3" />
            <path d="M272 664H322V709H272Z" fill="#b2e0e0" stroke="none" />
            <path d="M322.500 664V709M322 693.500H344" />
            <path d="M331 689l11 4-11 4z" fill="#111" />
            <path d="M344 650H383V708H344Z" fill="#b2e0e0" strokeWidth="2" />
          </g>
          <path d="M276 698.500H285M310.500 693.500H319.500M315 689V698M179 693.500H188M183.500 689V698" stroke="#c81414" strokeWidth="2" />
          <g className="font-['Liberation_Serif',serif] text-[15px]">
            <text x="160" y="701" fill="#c81414" className="font-bold italic">u<tspan className="text-[10px]" dy="2">C</tspan></text>
            <text x="194" y="689" fill="#111" className="text-[14px]">C</text>
            <text x="351" y="689" fill="#111" className="font-bold italic">R</text>
          </g>
        </svg>
      </article>
    </main>
  );
}

export default function App() {
  return (
    <div className={`relative h-screen overflow-hidden bg-white text-black ${ui}`}>
      <Article />
      <MultisimWindow />
      <OscilloscopeWindow />
      <p className="absolute right-[4px] bottom-2 font-['Liberation_Sans',sans-serif] text-[24px] leading-7 text-[#c0c0c0] [text-shadow:1px_1px_0_#e4e4e4]">
        CSDN @ccbbcc
      </p>
    </div>
  );
}
